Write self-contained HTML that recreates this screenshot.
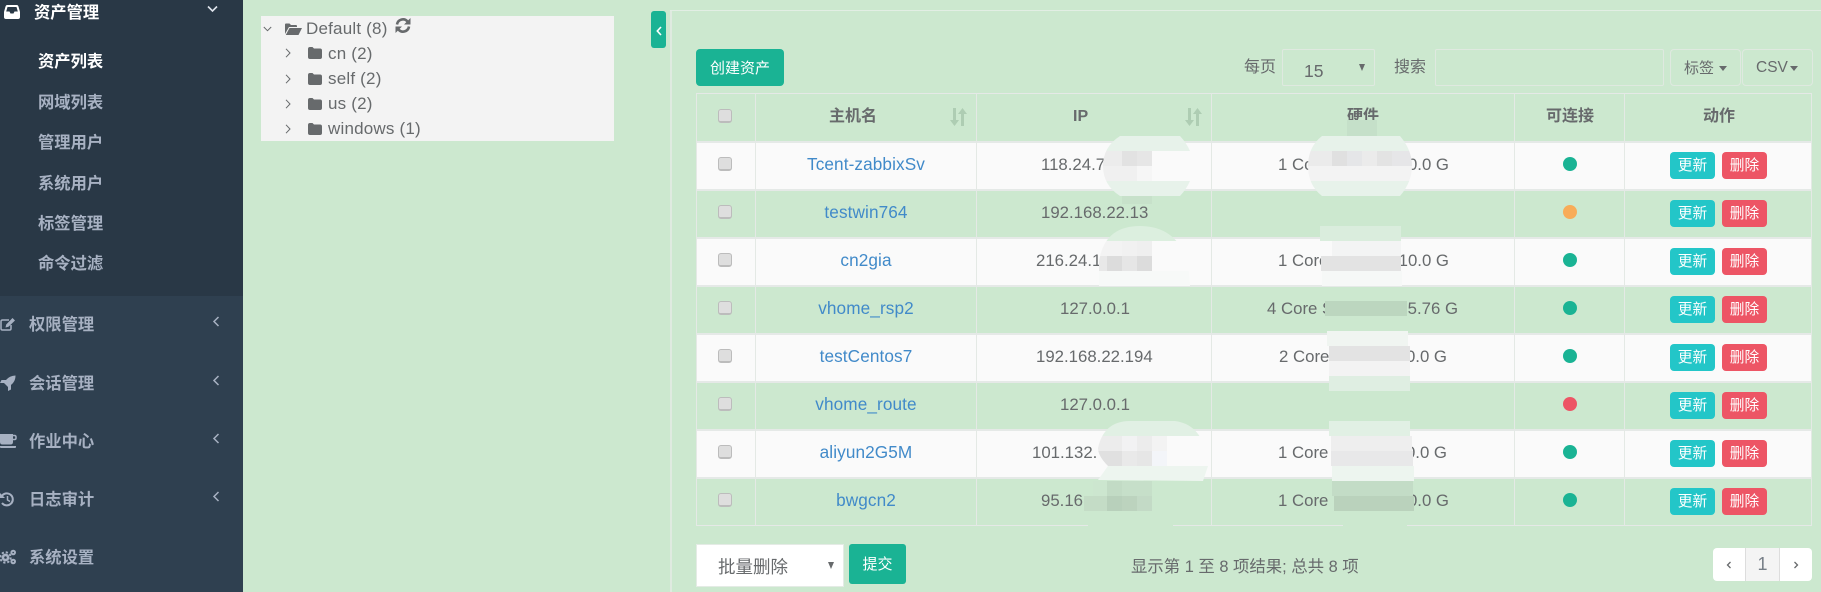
<!DOCTYPE html>
<html lang="zh"><head><meta charset="utf-8"><title>资产列表</title>
<style>
html,body{margin:0;padding:0;width:1821px;height:592px;overflow:hidden;background:#cce8cf}
body{position:relative;font-family:"Liberation Sans","Noto Sans CJK SC",sans-serif;font-size:16.8px;color:#676a6c}
div,span,a,svg{position:absolute}
.t{line-height:20px;height:20px;white-space:nowrap}
.c{text-align:center}
.side{left:0;top:0;width:243px;height:592px;background:#2f4050}
.dark{left:0;top:0;width:243px;height:296px;background:#293846}
.m{left:29px;margin-top:1px;font-size:16.3px;font-weight:bold;color:#a7b1c2;line-height:20px;white-space:nowrap}
.s{left:38px;margin-top:1px;font-size:16.3px;font-weight:bold;color:#a7b1c2;line-height:20px;white-space:nowrap}
.tr{left:328px;font-size:17px;letter-spacing:.2px;line-height:20px;white-space:nowrap;color:#676a6c}
.w{left:697px;width:1115px;height:47px;background:#fafafa}
.h{left:697px;width:1115px;height:2px;background:#e5e9e7}
.v{top:93px;width:1px;height:433px;background:#e4e9e5}
.cb{left:718px;margin-top:-1px;width:14px;height:14px;border:1px solid #bcbcbc;border-bottom-width:2px;border-radius:3px;background:#dedede;box-sizing:border-box}
.l{left:756px;width:220px;text-align:center;color:#418ac9;font-size:17.2px;letter-spacing:.1px;line-height:20px;white-space:nowrap}
.ip{line-height:20px;margin-top:1px;white-space:nowrap}
.hw{line-height:20px;margin-top:1px;white-space:nowrap}
.d{left:1563px;width:14px;height:14px;border-radius:50%;background:#1ab394}
.u,.x{width:45px;height:27px;border-radius:4px;color:#fff;text-align:center;line-height:29px;font-size:14.7px;overflow:hidden}
.u{left:1670px;background:#23c6c8}
.x{left:1722px;background:#ed5565}
.th{font-size:16px;font-weight:bold;line-height:20px;white-space:nowrap;top:107px;color:#676a6c}
.box{border:1px solid #dfe9e0;box-sizing:border-box;border-radius:2px}
</style></head><body>

<div class="side"></div><div class="dark"></div>

<svg style="left:4px;top:5px" width="16" height="14" viewBox="0 0 16 14"><path d="M3 0h10q1 0 1.500 1.500L16 7v5q0 2-2 2H2q-2 0-2-2V7l1.500-5.500Q2 0 3 0z" fill="#fff"/><path d="M3.500 2h9l1.300 4.500H10.500l-1 2h-3l-1-2H2.200z" fill="#293846"/></svg>
<div class="m" style="left:34px;top:2px;color:#fff">资产管理</div>
<svg style="left:207px;top:5px" width="11" height="8" viewBox="0 0 11 8"><path d="M1 1.500L5.500 6 10 1.500" fill="none" stroke="#dfe4ed" stroke-width="1.600"/></svg>
<div class="s" style="top:51px;color:#fff">资产列表</div>
<div class="s" style="top:92px">网域列表</div>
<div class="s" style="top:132px">管理用户</div>
<div class="s" style="top:173px">系统用户</div>
<div class="s" style="top:213px">标签管理</div>
<div class="s" style="top:253px">命令过滤</div>

<svg style="left:0;top:317px" width="16" height="15" viewBox="0 0 16 15"><path d="M9 3H2.500Q1 3 1 4.500v7Q1 13 2.500 13h7q1.500 0 1.500-1.500V8" fill="none" stroke="#a7b1c2" stroke-width="1.500"/><path d="M5.500 10.500l.7-3L12.500 1l2.500 2.500-6.500 6.300z" fill="#a7b1c2"/></svg>
<div class="m" style="top:314px">权限管理</div>
<svg style="left:212px;top:316px" width="8" height="11" viewBox="0 0 8 11"><path d="M6.500 1L2 5.500 6.500 10" fill="none" stroke="#a7b1c2" stroke-width="1.500"/></svg>

<svg style="left:0;top:375px" width="16" height="16" viewBox="0 0 16 16"><path d="M15.500.5Q9.500.8 6 5H1.500L0 8h4l4 4v4l3-1.500V10q4.500-3.500 4.500-9.500z" fill="#a7b1c2"/></svg>
<div class="m" style="top:373px">会话管理</div>
<svg style="left:212px;top:375px" width="8" height="11" viewBox="0 0 8 11"><path d="M6.500 1L2 5.500 6.500 10" fill="none" stroke="#a7b1c2" stroke-width="1.500"/></svg>

<svg style="left:0;top:433px" width="17" height="16" viewBox="0 0 17 16"><path d="M0 1h13v8q0 2.500-2.500 2.500h-8Q0 11.500 0 9z" fill="#a7b1c2"/><path d="M13 2.500h1.500q1.500 0 1.500 1.500v1q0 1.500-1.500 1.500H13" fill="none" stroke="#a7b1c2" stroke-width="1.500"/><path d="M0 13h16v1q0 1-1 1H1q-1 0-1-1z" fill="#a7b1c2"/></svg>
<div class="m" style="top:431px">作业中心</div>
<svg style="left:212px;top:433px" width="8" height="11" viewBox="0 0 8 11"><path d="M6.500 1L2 5.500 6.500 10" fill="none" stroke="#a7b1c2" stroke-width="1.500"/></svg>

<svg style="left:0;top:492px" width="15" height="15" viewBox="0 0 15 15"><path d="M1.500 4.500A6 6 0 1 1 2 11" fill="none" stroke="#a7b1c2" stroke-width="2"/><path d="M0 1v5h5z" fill="#a7b1c2"/><path d="M7.500 4v4l2.500 1.500" fill="none" stroke="#a7b1c2" stroke-width="1.500"/></svg>
<div class="m" style="top:489px">日志审计</div>
<svg style="left:212px;top:491px" width="8" height="11" viewBox="0 0 8 11"><path d="M6.500 1L2 5.500 6.500 10" fill="none" stroke="#a7b1c2" stroke-width="1.500"/></svg>

<svg style="left:0;top:549px" width="17" height="16" viewBox="0 0 17 16"><circle cx="5.500" cy="8.500" r="2.600" fill="none" stroke="#a7b1c2" stroke-width="2.600"/><circle cx="5.500" cy="8.500" r="5.200" fill="none" stroke="#a7b1c2" stroke-width="2" stroke-dasharray="2.200 1.900"/><circle cx="13.200" cy="3.500" r="1.800" fill="none" stroke="#a7b1c2" stroke-width="2"/><circle cx="13.200" cy="12.500" r="1.800" fill="none" stroke="#a7b1c2" stroke-width="2"/></svg>
<div class="m" style="top:547px">系统设置</div>

<!-- tree -->
<div style="left:261px;top:16px;width:353px;height:125px;background:#f3f3f3"></div>
<svg style="left:263px;top:26px" width="9" height="6" viewBox="0 0 9 6"><path d="M.8 1l3.700 3.700L8.200 1" fill="none" stroke="#676a6c" stroke-width="1"/></svg>
<svg style="left:285px;top:23px" width="17" height="12" viewBox="0 0 17 12"><path d="M0 11V1.500Q0 .5 1 .5h3.500l1.500 1.500h5q1 0 1 1V4H4L0 11z" fill="#676a6c"/><path d="M4.500 5H17l-3.500 7H.8z" fill="#676a6c"/></svg>
<div class="tr" style="left:306px;top:19px">Default (8)</div>
<svg style="left:395px;top:18px" width="16" height="15" viewBox="0 0 16 15"><path d="M2 6.500A6 6 0 0 1 12.500 3.500" fill="none" stroke="#676a6c" stroke-width="2.600"/><path d="M15.500 0v6.500h-6.500z" fill="#676a6c"/><path d="M14 8.500A6 6 0 0 1 3.500 11.500" fill="none" stroke="#676a6c" stroke-width="2.600"/><path d="M.5 15V8.500h6.500z" fill="#676a6c"/></svg>

<svg style="left:285px;top:48px" width="6" height="10" viewBox="0 0 6 10"><path d="M1 .8L5 5 1 9.200" fill="none" stroke="#676a6c" stroke-width="1"/></svg>
<svg style="left:308px;top:47px" width="14" height="12" viewBox="0 0 14 12"><path d="M0 2q0-2 2-2h2.500l1.500 1.500h6q2 0 2 2V10q0 2-2 2H2q-2 0-2-2z" fill="#676a6c"/></svg>
<div class="tr" style="top:44px">cn (2)</div>

<svg style="left:285px;top:74px" width="6" height="10" viewBox="0 0 6 10"><path d="M1 .8L5 5 1 9.200" fill="none" stroke="#676a6c" stroke-width="1"/></svg>
<svg style="left:308px;top:73px" width="14" height="12" viewBox="0 0 14 12"><path d="M0 2q0-2 2-2h2.500l1.500 1.500h6q2 0 2 2V10q0 2-2 2H2q-2 0-2-2z" fill="#676a6c"/></svg>
<div class="tr" style="top:69px">self (2)</div>

<svg style="left:285px;top:99px" width="6" height="10" viewBox="0 0 6 10"><path d="M1 .8L5 5 1 9.200" fill="none" stroke="#676a6c" stroke-width="1"/></svg>
<svg style="left:308px;top:98px" width="14" height="12" viewBox="0 0 14 12"><path d="M0 2q0-2 2-2h2.500l1.500 1.500h6q2 0 2 2V10q0 2-2 2H2q-2 0-2-2z" fill="#676a6c"/></svg>
<div class="tr" style="top:94px">us (2)</div>

<svg style="left:285px;top:124px" width="6" height="10" viewBox="0 0 6 10"><path d="M1 .8L5 5 1 9.200" fill="none" stroke="#676a6c" stroke-width="1"/></svg>
<svg style="left:308px;top:123px" width="14" height="12" viewBox="0 0 14 12"><path d="M0 2q0-2 2-2h2.500l1.500 1.500h6q2 0 2 2V10q0 2-2 2H2q-2 0-2-2z" fill="#676a6c"/></svg>
<div class="tr" style="top:119px">windows (1)</div>

<!-- toggle -->
<div style="left:651px;top:11px;width:15px;height:37px;background:#1ab394;border-radius:3px"></div>
<svg style="left:656px;top:26px" width="6" height="10" viewBox="0 0 6 10"><path d="M5 1L1.300 5 5 9" fill="none" stroke="#fff" stroke-width="1.600"/></svg>

<!-- panel -->
<div style="left:670px;top:10px;width:2px;height:582px;background:#dfeae0"></div>
<div style="left:670px;top:10px;width:1151px;height:1px;background:#e2eee4"></div>

<!-- toolbar -->
<div style="left:696px;top:49px;width:88px;height:37px;background:#1ab394;border-radius:4px;color:#fff;text-align:center;line-height:39px;font-size:15px">创建资产</div>
<div class="t" style="left:1244px;top:58px;font-size:16px">每页</div>
<div class="box" style="left:1282px;top:49px;width:93px;height:37px"></div>
<div class="t" style="left:1304px;top:61px;font-size:17.5px">15</div>
<div style="left:1359px;top:64px;width:0;height:0;border-left:3.500px solid transparent;border-right:3.500px solid transparent;border-top:7px solid #676a6c"></div>
<div class="t" style="left:1394px;top:58px;font-size:16px">搜索</div>
<div class="box" style="left:1435px;top:49px;width:229px;height:37px"></div>
<div class="box" style="left:1670px;top:49px;width:71px;height:37px;border-radius:4px"></div>
<div class="t" style="left:1684px;top:59px;font-size:15px">标签</div>
<div style="left:1719px;top:66px;width:0;height:0;border-left:4.500px solid transparent;border-right:4.500px solid transparent;border-top:5px solid #676a6c"></div>
<div class="box" style="left:1742px;top:49px;width:71px;height:37px;border-radius:4px"></div>
<div class="t" style="left:1756px;top:58px;font-size:15.500px">CSV</div>
<div style="left:1790px;top:66px;width:0;height:0;border-left:4.500px solid transparent;border-right:4.500px solid transparent;border-top:5px solid #676a6c"></div>

<!-- table stripes -->
<div class="w" style="top:142px"></div>
<div class="w" style="top:238px"></div>
<div class="w" style="top:334px"></div>
<div class="w" style="top:430px"></div>
<div class="h" style="top:93px;height:1px"></div>
<div class="h" style="top:141px"></div>
<div class="h" style="top:189px"></div>
<div class="h" style="top:237px"></div>
<div class="h" style="top:285px"></div>
<div class="h" style="top:333px"></div>
<div class="h" style="top:381px"></div>
<div class="h" style="top:429px"></div>
<div class="h" style="top:477px"></div>
<div class="h" style="top:525px;height:1px"></div>
<div class="v" style="left:696px"></div>
<div class="v" style="left:755px"></div>
<div class="v" style="left:976px"></div>
<div class="v" style="left:1211px"></div>
<div class="v" style="left:1514px"></div>
<div class="v" style="left:1624px"></div>
<div class="v" style="left:1811px"></div>

<!-- head -->
<div class="cb" style="top:110px"></div>
<div class="th" style="left:829px">主机名</div>
<svg style="left:950px;top:108px" width="17" height="18" viewBox="0 0 17 18"><path d="M3 0h3v12h3l-4.500 6L0 12h3zM11 18h3V6h3l-4.500-6L8 6h3z" fill="#aecdb3"/></svg>
<div class="th" style="left:1073px">IP</div>
<svg style="left:1185px;top:108px" width="17" height="18" viewBox="0 0 17 18"><path d="M3 0h3v12h3l-4.500 6L0 12h3zM11 18h3V6h3l-4.500-6L8 6h3z" fill="#aecdb3"/></svg>
<div class="th" style="left:1347px">硬件</div>
<div class="th" style="left:1546px">可连接</div>
<div class="th" style="left:1703px">动作</div>

<!-- rows -->
<div class="cb" style="top:158px"></div><div class="l" style="top:154px">Tcent-zabbixSv</div>
<div class="ip" style="left:1041px;top:154px">118.24.7</div>
<div class="hw" style="left:1278px;top:154px">1 Core</div><div class="hw" style="right:372px;top:154px">10.0 G</div>
<div class="d" style="top:157px"></div><div class="u" style="top:152px">更新</div><div class="x" style="top:152px">删除</div>

<div class="cb" style="top:206px"></div><div class="l" style="top:202px">testwin764</div>
<div class="ip" style="left:1041px;top:202px">192.168.22.13</div>
<div class="d" style="top:205px;background:#f8ac59"></div><div class="u" style="top:200px">更新</div><div class="x" style="top:200px">删除</div>

<div class="cb" style="top:254px"></div><div class="l" style="top:250px">cn2gia</div>
<div class="ip" style="left:1036px;top:250px">216.24.1</div>
<div class="hw" style="left:1278px;top:250px">1 Core</div><div class="hw" style="right:372px;top:250px">10.0 G</div>
<div class="d" style="top:253px"></div><div class="u" style="top:248px">更新</div><div class="x" style="top:248px">删除</div>

<div class="cb" style="top:302px"></div><div class="l" style="top:298px">vhome_rsp2</div>
<div class="ip" style="left:1060px;top:298px">127.0.0.1</div>
<div class="hw" style="left:1267px;top:298px">4 Core S</div><div class="hw" style="right:363px;top:298px">55.76 G</div>
<div class="d" style="top:301px"></div><div class="u" style="top:296px">更新</div><div class="x" style="top:296px">删除</div>

<div class="cb" style="top:350px"></div><div class="l" style="top:346px">testCentos7</div>
<div class="ip" style="left:1036px;top:346px">192.168.22.194</div>
<div class="hw" style="left:1279px;top:346px">2 Core</div><div class="hw" style="right:374px;top:346px">10.0 G</div>
<div class="d" style="top:349px"></div><div class="u" style="top:344px">更新</div><div class="x" style="top:344px">删除</div>

<div class="cb" style="top:398px"></div><div class="l" style="top:394px">vhome_route</div>
<div class="ip" style="left:1060px;top:394px">127.0.0.1</div>
<div class="d" style="top:397px;background:#ed5565"></div><div class="u" style="top:392px">更新</div><div class="x" style="top:392px">删除</div>

<div class="cb" style="top:446px"></div><div class="l" style="top:442px">aliyun2G5M</div>
<div class="ip" style="left:1032px;top:442px">101.132.</div>
<div class="hw" style="left:1278px;top:442px">1 Core</div><div class="hw" style="right:374px;top:442px">10.0 G</div>
<div class="d" style="top:445px"></div><div class="u" style="top:440px">更新</div><div class="x" style="top:440px">删除</div>

<div class="cb" style="top:494px"></div><div class="l" style="top:490px">bwgcn2</div>
<div class="ip" style="left:1041px;top:490px">95.16</div>
<div class="hw" style="left:1278px;top:490px">1 Core</div><div class="hw" style="right:372px;top:490px">10.0 G</div>
<div class="d" style="top:493px"></div><div class="u" style="top:488px">更新</div><div class="x" style="top:488px">删除</div>

<!-- mosaic overlay -->
<svg style="left:0;top:0" width="1821" height="592" viewBox="0 0 1821 592" shape-rendering="crispEdges">
<defs>
<clipPath id="ca"><path d="M1120 136H1180Q1193 150 1193 166T1180 196H1120Q1103 185 1103 166T1120 136z"/></clipPath>
<clipPath id="cb"><path d="M1099 286V262Q1104 226 1140 226T1188 262L1190 286z"/></clipPath>
<clipPath id="cc"><path d="M1098 480L1108 466Q1098 456 1098 448Q1104 421 1130 421H1175Q1205 425 1208 466L1203 481z"/></clipPath>
<clipPath id="ce"><path d="M1322 136H1400Q1412 150 1412 166T1400 196H1322Q1308 185 1308 166T1322 136z"/></clipPath>
</defs>
<g clip-path="url(#ca)"><rect x="1100" y="136" width="95" height="15" fill="#e7f2ea"/><rect x="1100" y="151" width="95" height="30" fill="#fafafa"/><rect x="1100" y="181" width="95" height="15" fill="#e7f2ea"/>
<rect x="1100" y="151" width="22" height="15" fill="#ececec"/><rect x="1122" y="151" width="15" height="15" fill="#e2e2e2"/><rect x="1137" y="151" width="15" height="15" fill="#e6e6e6"/>
<rect x="1100" y="166" width="37" height="15" fill="#f0f0f0"/><rect x="1137" y="166" width="15" height="15" fill="#f6f6f6"/></g>
<rect x="1122" y="196" width="30" height="8" fill="#c7e1ca"/>

<g clip-path="url(#cb)"><rect x="1095" y="226" width="100" height="15" fill="#dcefdf"/><rect x="1095" y="241" width="100" height="45" fill="#fafafa"/>
<rect x="1095" y="241" width="27" height="15" fill="#f3f3f3"/><rect x="1122" y="241" width="15" height="15" fill="#f1f1f1"/><rect x="1137" y="241" width="15" height="15" fill="#efefef"/>
<rect x="1099" y="256" width="8" height="15" fill="#e8e8e8"/><rect x="1107" y="256" width="15" height="15" fill="#dcdcdc"/><rect x="1122" y="256" width="15" height="15" fill="#e6e6e6"/><rect x="1137" y="256" width="15" height="15" fill="#dcdcdc"/>
<rect x="1095" y="271" width="100" height="15" fill="#f7f9f8"/></g>

<g clip-path="url(#cc)"><rect x="1095" y="421" width="115" height="15" fill="#e1f0e4"/><rect x="1095" y="436" width="115" height="30" fill="#fafafa"/>
<rect x="1095" y="436" width="27" height="15" fill="#ececec"/><rect x="1122" y="436" width="15" height="15" fill="#f2f2f3"/><rect x="1137" y="436" width="15" height="15" fill="#ececec"/><rect x="1152" y="436" width="15" height="15" fill="#f3f3f3"/>
<rect x="1095" y="451" width="27" height="15" fill="#e0e0e0"/><rect x="1122" y="451" width="15" height="15" fill="#e9e9e9"/><rect x="1137" y="451" width="15" height="15" fill="#e6e6e6"/><rect x="1152" y="451" width="15" height="15" fill="#f3f5f9"/>
<rect x="1095" y="466" width="115" height="15" fill="#edf5ef"/></g>
<rect x="1093" y="481" width="14" height="15" fill="#cce6cf"/><rect x="1107" y="481" width="15" height="15" fill="#c2dbc5"/><rect x="1122" y="481" width="30" height="15" fill="#c6dfc9"/>
<rect x="1084" y="496" width="23" height="15" fill="#c4dcc6"/><rect x="1107" y="496" width="15" height="15" fill="#b8d0bb"/><rect x="1122" y="496" width="15" height="15" fill="#bcd3be"/><rect x="1137" y="496" width="15" height="15" fill="#c3dac6"/>
<rect x="1088" y="511" width="85" height="16" fill="#cce8cf"/>

<rect x="1347" y="120" width="30" height="16" fill="#c5e0c9"/>
<g clip-path="url(#ce)"><rect x="1305" y="136" width="110" height="15" fill="#e7f2ea"/><rect x="1305" y="151" width="27" height="15" fill="#ebebeb"/><rect x="1332" y="151" width="15" height="15" fill="#e0e0e0"/><rect x="1347" y="151" width="15" height="15" fill="#e5e6e8"/><rect x="1362" y="151" width="15" height="15" fill="#ebebeb"/><rect x="1377" y="151" width="15" height="15" fill="#e3e3e3"/><rect x="1392" y="151" width="23" height="15" fill="#e6e6e8"/><rect x="1305" y="166" width="110" height="15" fill="#f3f3f3"/><rect x="1305" y="181" width="110" height="15" fill="#e7f2ea"/></g>

<rect x="1320" y="226" width="81" height="15" fill="#daeddd"/><rect x="1332" y="241" width="69" height="15" fill="#f3f4f4"/><rect x="1321" y="256" width="80" height="15" fill="#e3e3e3"/><rect x="1322" y="271" width="80" height="15" fill="#f6f8f7"/>
<rect x="1325" y="301" width="82" height="15" fill="#bcd6bf"/>
<rect x="1327" y="331" width="81" height="15" fill="#f0f5f1"/><rect x="1329" y="346" width="81" height="15" fill="#e3e3e3"/><rect x="1329" y="361" width="81" height="15" fill="#f3f3f3"/><rect x="1329" y="376" width="81" height="15" fill="#dfeee2"/>
<rect x="1329" y="421" width="81" height="15" fill="#e1f0e4"/><rect x="1331" y="436" width="81" height="15" fill="#eeeeee"/><rect x="1331" y="451" width="82" height="15" fill="#e8e8e9"/><rect x="1332" y="466" width="82" height="15" fill="#edf5ef"/>
<rect x="1332" y="481" width="81" height="15" fill="#c3dcc6"/><rect x="1334" y="496" width="80" height="15" fill="#bad2bc"/><rect x="1343" y="511" width="64" height="16" fill="#cce8cf"/>
</svg>

<!-- footer -->
<div style="left:696px;top:544px;width:148px;height:43px;background:#fff;border:1px solid #e4ebe5;box-sizing:border-box"></div>
<div class="t" style="left:718px;top:557px;font-size:17.500px">批量删除</div>
<div style="left:828px;top:562px;width:0;height:0;border-left:3.500px solid transparent;border-right:3.500px solid transparent;border-top:7px solid #676a6c"></div>
<div style="left:849px;top:544px;width:57px;height:40px;background:#1ab394;border-radius:3px;color:#fff;text-align:center;line-height:41px;font-size:15px">提交</div>
<div class="t" style="left:1131px;top:557px;font-size:16.400px">显示第 1 至 8 项结果; 总共 8 项</div>

<div style="left:1713px;top:548px;width:99px;height:33px;background:#fff;border-radius:4px"></div>
<div style="left:1745px;top:548px;width:35px;height:33px;background:#f4f4f4;border-left:1px solid #ddd;border-right:1px solid #ddd;box-sizing:border-box;text-align:center;line-height:33px;font-size:18px;color:#777f88">1</div>
<svg style="left:1726px;top:561px" width="6" height="8" viewBox="0 0 6 8"><path d="M4.500 1L1.500 4l3 3" fill="none" stroke="#676a6c" stroke-width="1.300"/></svg>
<svg style="left:1793px;top:561px" width="6" height="8" viewBox="0 0 6 8"><path d="M1.500 1l3 3-3 3" fill="none" stroke="#676a6c" stroke-width="1.300"/></svg>
</body></html>
